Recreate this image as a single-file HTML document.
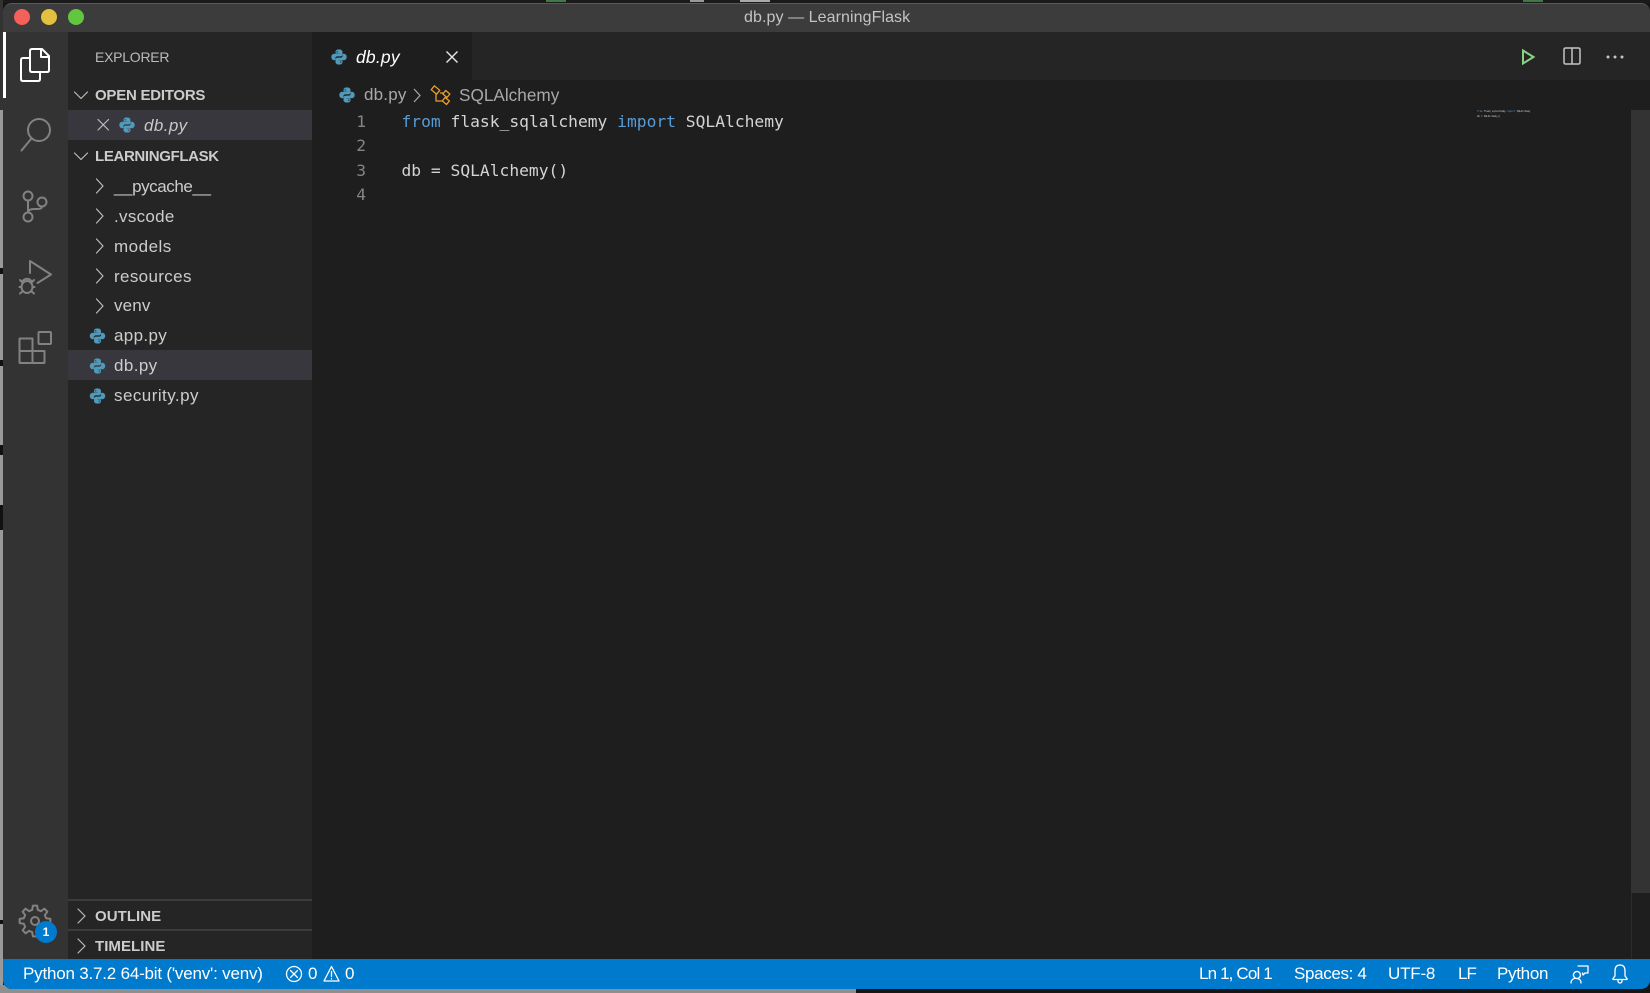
<!DOCTYPE html>
<html><head><meta charset="utf-8"><title>db.py — LearningFlask</title>
<style>
html,body{margin:0;padding:0;width:1650px;height:993px;overflow:hidden;background:#161616}
*{box-sizing:border-box}
#r{position:absolute;left:0;top:0;width:1650px;height:993px;overflow:hidden;filter:blur(.35px)}
.b{position:absolute}
.t{position:absolute;white-space:nowrap;height:24px;line-height:24px;font-family:"Liberation Sans",sans-serif;font-size:17px;color:#cccccc}
.h{font-weight:bold;font-size:15px}
.m{font-family:"DejaVu Sans Mono","Liberation Mono",monospace;font-size:16.3px;color:#d4d4d4}
.k{color:#569cd6}
.n{color:#858585;text-align:right;width:30px;left:336px}
.s{color:#fff;font-size:17px}
svg{position:absolute;overflow:visible}
.a{fill:none;stroke:#828282;stroke-width:2;stroke-linejoin:round;stroke-linecap:round}
.c{fill:none;stroke:#bcbcbc;stroke-width:1.2;stroke-linecap:round;stroke-linejoin:round}
</style></head><body>
<svg width="0" height="0" style="position:absolute"><defs>
<g id="py" fill="#519aba" stroke="#519aba" stroke-width=".4">
<path d="M7.9.6C5.6.6 4.7 1.5 4.7 2.8V4.4H8.2V5H3C1.5 5 .5 6.2.5 8S1.5 11 3 11H4.2V9.3C4.2 8 5.2 7.1 6.5 7.1H9.7C10.7 7.1 11.3 6.4 11.3 5.4V2.9C11.3 1.5 10.2.6 7.9.6ZM6.2 2A.8.8 0 1 1 6.2 3.6.8.8 0 0 1 6.2 2Z" fill-rule="evenodd"/>
<path transform="rotate(180 8 8)" d="M7.9.6C5.6.6 4.7 1.5 4.7 2.8V4.4H8.2V5H3C1.5 5 .5 6.2.5 8S1.5 11 3 11H4.2V9.3C4.2 8 5.2 7.1 6.5 7.1H9.7C10.7 7.1 11.3 6.4 11.3 5.4V2.9C11.3 1.5 10.2.6 7.9.6ZM6.2 2A.8.8 0 1 1 6.2 3.6.8.8 0 0 1 6.2 2Z" fill-rule="evenodd"/>
</g></defs></svg>
<div id="r">
<!-- outer strips -->
<div class="b" style="left:0;top:0;width:1650px;height:3px;background:#1a1a1a"></div>
<div class="b" style="left:546px;top:0;width:20px;height:2px;background:#3f7a46"></div>
<div class="b" style="left:690px;top:0;width:14px;height:2px;background:#999"></div>
<div class="b" style="left:740px;top:0;width:30px;height:2px;background:#aaa"></div>
<div class="b" style="left:1523px;top:0;width:20px;height:2px;background:#3f7a46"></div>
<div class="b" style="left:0;top:0;width:3px;height:993px;background:#9a9a9a"></div>
<div class="b" style="left:0;top:0;width:3px;height:110px;background:#333"></div>
<div class="b" style="left:0;top:268px;width:3px;height:6px;background:#111"></div>
<div class="b" style="left:0;top:360px;width:3px;height:6px;background:#111"></div>
<div class="b" style="left:0;top:445px;width:3px;height:10px;background:#111"></div>
<div class="b" style="left:0;top:505px;width:3px;height:25px;background:#111"></div>
<div class="b" style="left:0;top:920px;width:3px;height:4px;background:#111"></div>
<div class="b" style="left:0;top:985px;width:856px;height:8px;background:#8f8f8f"></div>

<!-- window -->
<div class="b" style="left:3px;top:3px;width:1647px;height:986px;border-radius:9px;overflow:hidden;background:#1e1e1e"></div>
<!-- title bar -->
<div class="b" style="left:3px;top:3px;width:1647px;height:29px;background:#3c3c3c;border-radius:9px 9px 0 0;border-top:1px solid #5a5a5a"></div>
<div class="b" style="left:14px;top:9px;width:16px;height:16px;border-radius:50%;background:#f4605a"></div>
<div class="b" style="left:41px;top:9px;width:16px;height:16px;border-radius:50%;background:#e5bf3f"></div>
<div class="b" style="left:68px;top:9px;width:16px;height:16px;border-radius:50%;background:#62c63f"></div>
<div class="t" style="left:744px;top:6px;font-size:16px;color:#c4c4c4;letter-spacing:.08px">db.py — LearningFlask</div>

<!-- activity bar -->
<div class="b" style="left:3px;top:32px;width:65px;height:927px;background:#333333"></div>
<div class="b" style="left:3px;top:32px;width:3px;height:66px;background:#ffffff"></div>
<svg style="left:0;top:0" width="68" height="960">
<g fill="none" stroke="#fff" stroke-width="2" stroke-linejoin="round">
<path d="M30 58H23Q21 58 21 60V79Q21 81 23 81H38Q40 81 40 79V72"/>
<path d="M32 49H42L49 56V70Q49 72 47 72H32Q30 72 30 70V51Q30 49 32 49Z"/>
<path d="M41 50V57H48"/>
</g>
<circle class="a" cx="39" cy="130" r="11"/><path class="a" d="M31 139L21.500 150.500"/>
<g class="a"><circle cx="28" cy="196" r="4.500"/><circle cx="42" cy="202" r="4.500"/><circle cx="28" cy="217" r="4.500"/>
<path d="M28 200.500V212.500M42 206.500C42 209 39 209 35 209C31 209 28 210 28 212.500"/></g>
<g class="a"><path d="M30 273V261L51 274.500L37.500 283"/>
<ellipse cx="27" cy="287" rx="5.500" ry="6"/><path d="M23 280.500Q27 277 31 280.500M20 280L23 283M34 280L31 283M19.500 287H21.500M32.500 287H34.500M20 293.500L23 291M34 293.500L31 291"/></g>
<g class="a"><rect x="38.500" y="332" width="12.500" height="12" rx="1"/><path d="M20 338.500H32.500V363H20Q19.500 363 19.500 362V339Q19.500 338.500 20 338.500ZM19.500 351H44.500V362Q44.500 363 44 363H32.500"/></g>
<g transform="translate(35 921)" class="a"><polygon points="11.16,-2.78 15.35,-2.16 15.35,2.16 11.16,2.78 9.86,5.92 12.38,9.33 9.33,12.38 5.92,9.86 2.78,11.16 2.16,15.35 -2.16,15.35 -2.78,11.16 -5.92,9.86 -9.33,12.38 -12.38,9.33 -9.86,5.92 -11.16,2.78 -15.35,2.16 -15.35,-2.16 -11.16,-2.78 -9.86,-5.92 -12.38,-9.33 -9.33,-12.38 -5.92,-9.86 -2.78,-11.16 -2.16,-15.35 2.16,-15.35 2.78,-11.16 5.92,-9.86 9.33,-12.38 12.38,-9.33 9.86,-5.92"/><circle r="4"/></g>
<circle cx="46" cy="932" r="11" fill="#007acc"/>
</svg>
<div class="t" style="left:36px;top:920px;width:20px;text-align:center;font-size:12px;font-weight:bold;color:#fff">1</div>

<!-- sidebar -->
<div class="b" style="left:68px;top:32px;width:244px;height:927px;background:#252526"></div>
<div class="b" style="left:68px;top:110px;width:244px;height:30px;background:#37373d"></div>
<div class="b" style="left:68px;top:350px;width:244px;height:30px;background:#37373d"></div>
<div class="b" style="left:68px;top:899px;width:244px;height:2px;background:#3c3c3c"></div>
<div class="b" style="left:68px;top:929px;width:244px;height:2px;background:#3c3c3c"></div>

<div class="t" style="left:95px;top:45px;font-size:14px;color:#bbbbbb;letter-spacing:-.25px">EXPLORER</div>
<div class="t h" style="left:95px;top:84px;letter-spacing:-.24px">OPEN EDITORS</div>
<div class="t h" style="left:95px;top:145px;letter-spacing:-.35px">LEARNINGFLASK</div>
<div class="t" style="left:144px;top:114px;font-style:italic;color:#c8c8c8;letter-spacing:.4px">db.py</div>
<div class="t" style="left:114px;top:175px;letter-spacing:-.42px">__pycache__</div>
<div class="t" style="left:114px;top:205px;letter-spacing:.3px">.vscode</div>
<div class="t" style="left:114px;top:235px;letter-spacing:.5px">models</div>
<div class="t" style="left:114px;top:265px;letter-spacing:.35px">resources</div>
<div class="t" style="left:114px;top:294px;letter-spacing:.15px">venv</div>
<div class="t" style="left:114px;top:324px;letter-spacing:.35px">app.py</div>
<div class="t" style="left:114px;top:354px;letter-spacing:.4px">db.py</div>
<div class="t" style="left:114px;top:384px;letter-spacing:.45px">security.py</div>
<div class="t h" style="left:95px;top:905px;letter-spacing:.05px">OUTLINE</div>
<div class="t h" style="left:95px;top:935px;letter-spacing:.05px">TIMELINE</div>

<svg style="left:0;top:0" width="320" height="960">
<path class="c" d="M74.500 92L81 98.500L87.500 92M74.500 153L81 159.500L87.500 153"/>
<path class="c" d="M96.500 179L103 186L96.500 193M96.500 209L103 216L96.500 223M96.500 239L103 246L96.500 253M96.500 269L103 276L96.500 283M96.500 299L103 306L96.500 313"/>
<path class="c" d="M78 909L85 916L78 923M78 939L85 946L78 953"/>
<path class="c" d="M98 119.500L108.500 130M108.500 119.500L98 130"/>
<use href="#py" x="119" y="117"/>
<use href="#py" x="89.500" y="328"/>
<use href="#py" x="89.500" y="358"/>
<use href="#py" x="89.500" y="388"/>
</svg>

<!-- tab bar -->
<div class="b" style="left:312px;top:32px;width:1338px;height:48px;background:#252526"></div>
<div class="b" style="left:312px;top:32px;width:160px;height:48px;background:#1e1e1e"></div>
<div class="t" style="left:356px;top:45px;font-style:italic;color:#fff;font-size:17.500px;letter-spacing:.2px">db.py</div>
<svg style="left:0;top:0" width="1650" height="120">
<use href="#py" x="331" y="49"/>
<path d="M446.500 51.500L457.500 62.500M457.500 51.500L446.500 62.500" stroke="#e8e8e8" stroke-width="1.400" fill="none"/>
<path d="M1523 50.500L1533.500 57L1523 63.500Z" fill="none" stroke="#89d185" stroke-width="2"/>
<rect x="1564" y="48" width="16" height="16" rx="1.500" fill="none" stroke="#c5c5c5" stroke-width="1.500"/>
<path d="M1572 48V64" stroke="#c5c5c5" stroke-width="1.500"/>
<circle cx="1608" cy="57" r="1.500" fill="#c5c5c5"/><circle cx="1615" cy="57" r="1.500" fill="#c5c5c5"/><circle cx="1622" cy="57" r="1.500" fill="#c5c5c5"/>
<use href="#py" x="339" y="87"/>
<path d="M414 89L420 95.500L414 102" fill="none" stroke="#aaa" stroke-width="1.200"/>
<g fill="none" stroke="#ee9d28" stroke-width="1.300" stroke-linejoin="round">
<rect x="432" y="87.500" width="7" height="5" transform="rotate(40 435.500 90)"/>
<rect x="443.500" y="91.500" width="5.500" height="4.500" transform="rotate(40 446 94)"/>
<rect x="443" y="98.500" width="5.500" height="4.500" transform="rotate(40 445.500 101)"/>
<path d="M440 93H444M436 94V101H442"/>
</g>
</svg>
<div class="t" style="left:364px;top:83px;color:#a8a8a8;letter-spacing:.2px">db.py</div>
<div class="t" style="left:459px;top:83px;color:#a8a8a8;font-size:17.200px">SQLAlchemy</div>

<!-- editor -->
<div class="t m n" style="top:110px">1</div>
<div class="t m n" style="top:134px">2</div>
<div class="t m n" style="top:158.500px">3</div>
<div class="t m n" style="top:183px">4</div>
<div class="t m" style="left:401.500px;top:110px"><span class="k">from</span> flask_sqlalchemy <span class="k">import</span> SQLAlchemy</div>
<div class="t m" style="left:401.500px;top:158.500px">db = SQLAlchemy()</div>

<!-- minimap + scroll -->
<div class="t m" style="left:1477px;top:100px;font-size:2.270px"><span class="k">from</span> flask_sqlalchemy <span class="k">import</span> SQLAlchemy</div>
<div class="t m" style="left:1477px;top:105px;font-size:2.270px">db = SQLAlchemy()</div>
<div class="b" style="left:1631px;top:110px;width:19px;height:783px;background:#333333"></div>
<div class="b" style="left:1631px;top:893px;width:1px;height:66px;background:#2c2c2c"></div>

<!-- status bar -->
<div class="b" style="left:3px;top:959px;width:1647px;height:30px;background:#007acc;border-radius:0 0 9px 9px"></div>
<div class="t s" style="left:23px;top:962px;letter-spacing:-.2px">Python 3.7.2 64-bit ('venv': venv)</div>
<div class="t s" style="left:308px;top:962px">0</div>
<div class="t s" style="left:345px;top:962px">0</div>
<div class="t s" style="left:1199px;top:962px;letter-spacing:-.85px">Ln 1, Col 1</div>
<div class="t s" style="left:1294px;top:962px;letter-spacing:-.35px">Spaces: 4</div>
<div class="t s" style="left:1388px;top:962px;letter-spacing:-.2px">UTF-8</div>
<div class="t s" style="left:1458px;top:962px;letter-spacing:-1px">LF</div>
<div class="t s" style="left:1497px;top:962px;letter-spacing:-.3px">Python</div>
<svg style="left:0;top:955px" width="1650" height="38">
<g fill="none" stroke="#fff" stroke-width="1.300" stroke-linejoin="round" stroke-linecap="round">
<circle cx="294" cy="19" r="7.500"/><path d="M290.500 15.500L297.500 22.500M297.500 15.500L290.500 22.500"/>
<path d="M331.500 11.500L339 26H324Z"/><path d="M331.500 16.500V21.500M331.500 23.500V24"/>
<path d="M1578 11H1588V18H1585L1583 20L1582.500 18M1577 16.500A3.500 3.500 0 1 1 1576.900 16.500M1571 28C1571 24.500 1574 23 1576.500 23.500C1579 23.500 1581 25 1581 28"/>
<path d="M1620 10C1616.500 10 1615 12.500 1615 16V21L1613 23.500V24.500H1627V23.500L1625 21V16C1625 12.500 1623.500 10 1620 10ZM1618 25V26A2 2 0 0 0 1622 26V25"/>
</g></svg>
</div>
</body></html>
